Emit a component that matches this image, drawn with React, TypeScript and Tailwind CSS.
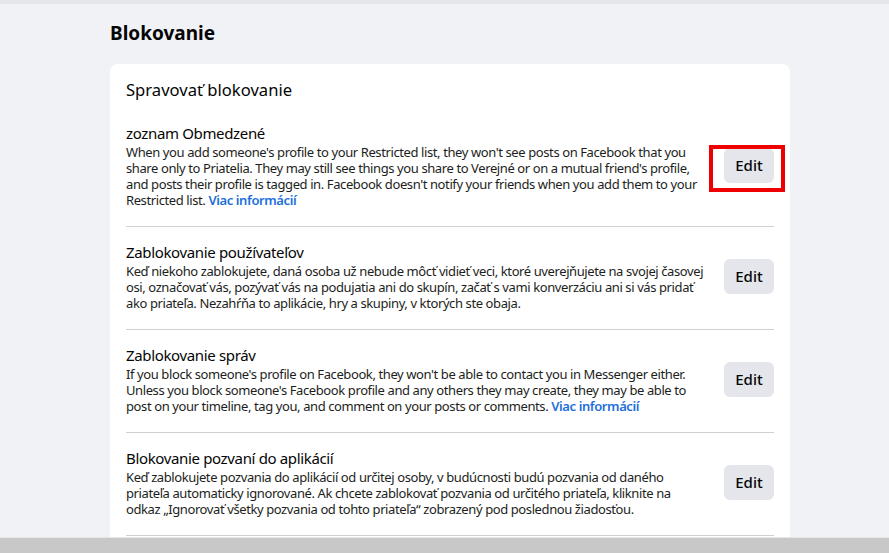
const sections = [
  {
    title: "zoznam Obmedzené",
    text: "When you add someone's profile to your Restricted list, they won't see posts on Facebook that you share only to Priatelia. They may still see things you share to Verejné or on a mutual friend's profile, and posts their profile is tagged in. Facebook doesn't notify your friends when you add them to your Restricted list.",
    link: true,
    highlight: true,
  },
  {
    title: "Zablokovanie používateľov",
    text: "Keď niekoho zablokujete, daná osoba už nebude môcť vidieť veci, ktoré uverejňujete na svojej časovej osi, označovať vás, pozývať vás na podujatia ani do skupín, začať s vami konverzáciu ani si vás pridať ako priateľa. Nezahŕňa to aplikácie, hry a skupiny, v ktorých ste obaja.",
  },
  {
    title: "Zablokovanie správ",
    text: "If you block someone's profile on Facebook, they won't be able to contact you in Messenger either. Unless you block someone's Facebook profile and any others they may create, they may be able to post on your timeline, tag you, and comment on your posts or comments.",
    link: true,
  },
  {
    title: "Blokovanie pozvaní do aplikácií",
    text: "Keď zablokujete pozvania do aplikácií od určitej osoby, v budúcnosti budú pozvania od daného priateľa automaticky ignorované. Ak chcete zablokovať pozvania od určitého priateľa, kliknite na odkaz „Ignorovať všetky pozvania od tohto priateľa“ zobrazený pod poslednou žiadosťou.",
  },
]

export default function App() {
  return (
    <div
      className="h-[553px] overflow-hidden bg-[#f0f2f5] flex flex-col text-[#050505]"
      style={{ fontFamily: '"Noto Sans", "Open Sans", sans-serif' }}
    >
      <div className="h-[4px] bg-[#e4e6e9] shrink-0" />
      <div className="flex-1 overflow-hidden ml-[110px] w-[680px]">
        <h1 className="text-[19px] font-bold leading-[24px] mt-[17px] mb-[19px]">Blokovanie</h1>
        <div className="bg-white rounded-lg px-4 pt-[14px]">
          <h2 className="text-[16.6px] leading-[24px] mb-[20px]">Spravovať blokovanie</h2>
          {sections.map((s, i) => (
            <div key={s.title}>
              {i > 0 && <div className="h-px bg-[#ced0d4] mt-[18px] mb-[14px]" />}
              <div className="flex items-center gap-4">
                <div className="flex-1">
                  <div className="text-[15px] leading-[22px] tracking-[-0.35px]">{s.title}</div>
                  <p className="text-[13px] leading-[16px] text-[#1c1e21] tracking-[-0.4px] pr-[2px]">
                    {s.text}
                    {s.link && (
                      <>
                        {" "}
                        <a className="text-[#216fdb] font-semibold">Viac informácií</a>
                      </>
                    )}
                  </p>
                </div>
                <div className="relative shrink-0">
                  <button className="bg-[#e4e6eb] rounded-md w-[50px] h-[35px] text-[15px] font-medium text-[#050505]">
                    Edit
                  </button>
                  {s.highlight && (
                    <div className="absolute -left-[15px] -right-[11px] -top-[3px] -bottom-[9px] border-4 border-[#ee0000]" />
                  )}
                </div>
              </div>
            </div>
          ))}
          <div className="h-px bg-[#ced0d4] mt-[18px]" />
          <div className="h-20" />
        </div>
      </div>
      <div className="h-[16px] shrink-0 bg-[#c8c8c8] border-t border-[#e6e6e6]" />
    </div>
  )
}
